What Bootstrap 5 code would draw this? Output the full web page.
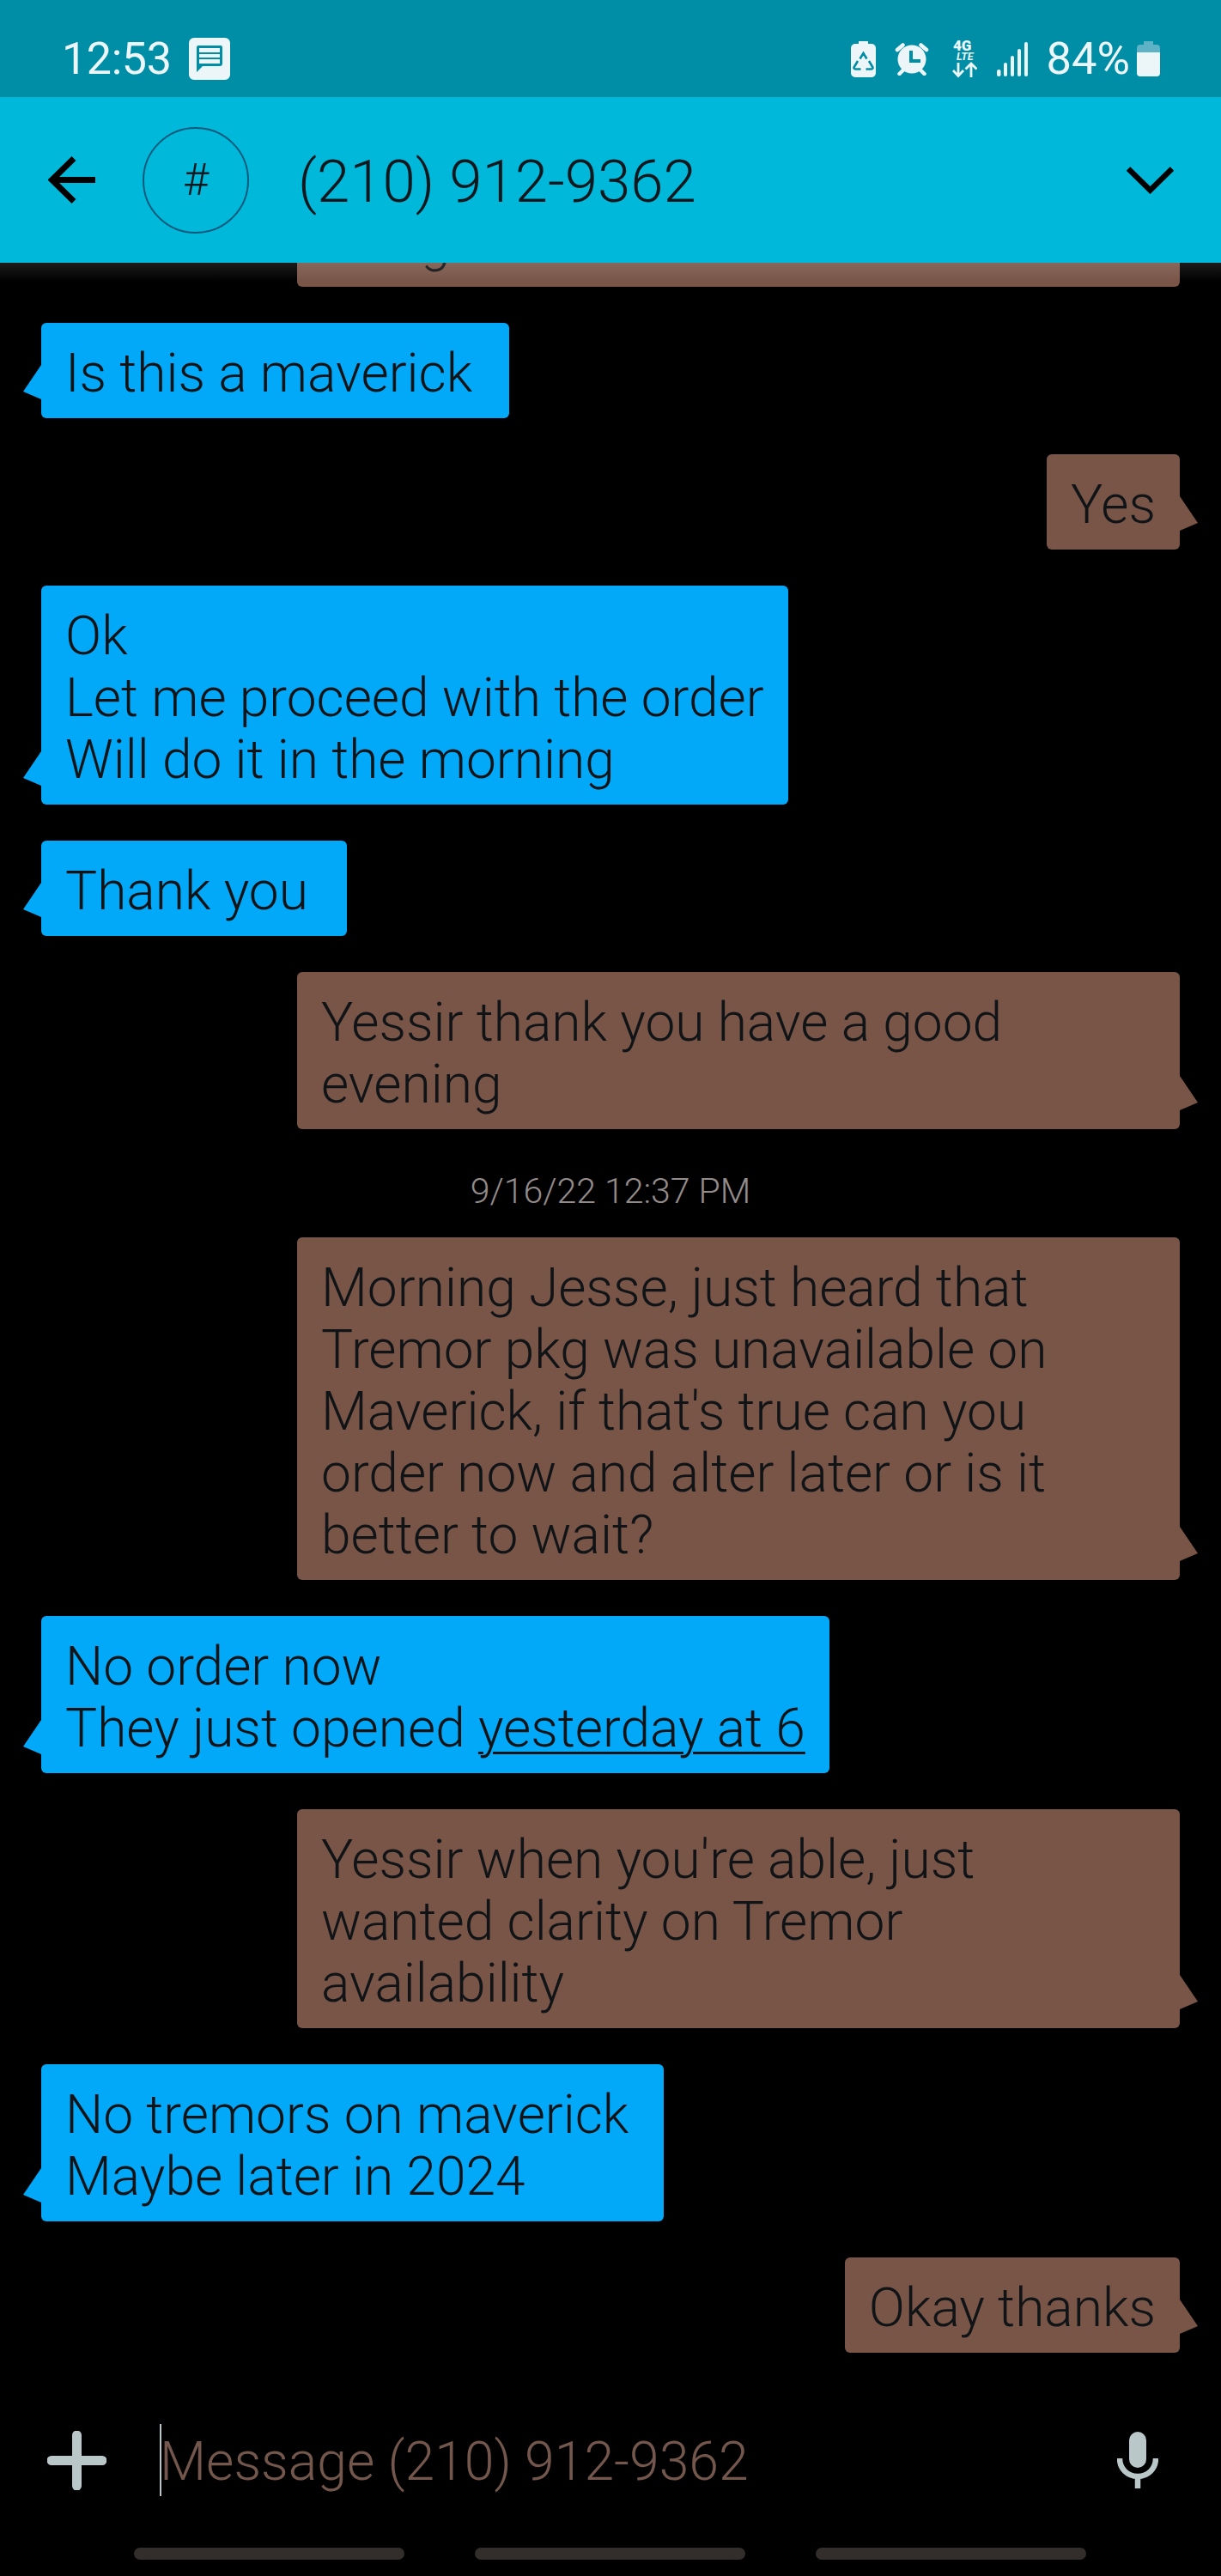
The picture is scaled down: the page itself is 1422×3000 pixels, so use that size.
<!DOCTYPE html>
<html lang="en">
<head>
<meta charset="utf-8">
<title>(210) 912-9362</title>
<link href="https://cdn.jsdelivr.net/npm/bootstrap@5.3.0/dist/css/bootstrap.min.css" rel="stylesheet">
<style>
html,body{background:#000;margin:0}
body{font-family:Roboto,"Liberation Sans",sans-serif;font-weight:300;width:1422px;height:3000px;overflow:hidden}
.sbar{height:113px;background:#008ea6;color:#ecf6f8;padding:24px 71px 0 72px;font-weight:400}
.sbar-time{font-size:52px;line-height:1;letter-spacing:-.4px;margin-right:20px}
.sbar-pct{font-size:52.5px;line-height:1;margin-left:22px;margin-right:8px}
.sbar svg{display:block;fill:#ecf6f8;flex:none}
.gap-22{margin-right:22px}
.gap-27{margin-right:27px}
.gap-23{margin-right:23px}
.apphead{height:193px;background:#00b8d9;padding:0 55px 0 56px;color:#10181e;position:relative;z-index:2}
.avatar{width:124px;height:124px;border:2px solid #085a7c;border-radius:50%;font-size:52px;margin-left:55px;margin-right:57px;flex:none}
.headname{font-size:69px;line-height:1;margin-top:3px}
.convo{height:2454px;overflow:hidden;padding:0 48px;position:relative}
.sheen{position:absolute;left:0;right:0;top:0;height:22px;background:linear-gradient(rgba(255,255,255,.11),rgba(255,255,255,0));pointer-events:none}
.bub{font-size:62.25px;line-height:72px;padding:23px 28px 16px 28px;border-radius:6px;color:#101417;position:relative;margin-bottom:42px;flex:none}
.bub-in{background:#03a9f9;align-self:flex-start}
.bub-out{background:#795548;align-self:flex-end}
.bub-wide{width:1028px}
.w-maverick{width:545px}
.w-thanks{width:356px}
.w-tremors{width:725px}
.tail{position:absolute;bottom:22px;width:21px;height:40px}
.bub-in .tail{left:-21px}
.bub-out .tail{right:-21px}
.tail-in{fill:#03a9f9}
.tail-out{fill:#795548}
.cliptop{margin-top:-155px}
.gword{padding-left:116px}
.stamp{font-size:41px;line-height:48px;color:#948c8a;text-align:center;margin:6px -48px 30px;flex:none}
.under{text-decoration:underline;text-underline-offset:6px;text-decoration-thickness:3px}
.composer{height:207px;padding:3px 73px 0 55px}
.caret{width:2px;height:84px;background:#b9c5c7;flex:none;margin-left:62px}
.ph{font-size:62.5px;color:#74574c;line-height:1;margin:5px 0 0 -2px}
.navline{gap:82px;padding-right:2px}
.navpill{width:315px;height:14px;background:#332e2c;border-radius:7px}
</style>
</head>
<body>
<div class="sbar d-flex align-items-center justify-content-between">
  <div class="d-flex align-items-center">
    <span class="sbar-time">12:53</span>
    <svg width="48" height="49" viewBox="0 0 48 49"><path fill-rule="evenodd" d="M6 0h36a6 6 0 0 1 6 6v37a6 6 0 0 1-6 6H6a6 6 0 0 1-6-6V6a6 6 0 0 1 6-6zM9 11v29l7-7h20a3 3 0 0 0 3-3V11a2 2 0 0 0-2-2H11a2 2 0 0 0-2 2zM12 12h24v5H12zM12 19h24v4H12zM12 25h24v5H12z"/></svg>
  </div>
  <div class="d-flex align-items-center">
    <svg class="gap-22" width="29" height="42" viewBox="0 0 29 42"><path d="M9 0h11v3h4a5 5 0 0 1 5 5v29a5 5 0 0 1-5 5H5a5 5 0 0 1-5-5V8a5 5 0 0 1 5-5h4z"/><path d="M10.500 20.500 14.500 14 18.500 20.500M8 23 3.800 30a1.600 1.600 0 0 0 1.400 2.500H11.500M21 23 25.200 30a1.600 1.600 0 0 1-1.400 2.500H17.500" fill="none" stroke="#008ea6" stroke-width="2.600"/></svg>
    <svg class="gap-27" width="40" height="39" viewBox="0 0 40 39"><circle cx="20" cy="20" r="16.500"/><path d="M3 9 9.500 3.500M37 9 30.500 3.500M5.500 37 9.500 33M34.500 37 30.500 33" stroke="#ecf6f8" stroke-width="4.500" stroke-linecap="round" fill="none"/><path d="M19 10V22H30" stroke="#008ea6" stroke-width="4" fill="none"/></svg>
    <svg class="gap-23" width="29" height="51" viewBox="0 -4 29 51"><text x="1" y="12" font-size="17" font-weight="900" font-family="Roboto" fill="#ecf6f8">4G</text><text x="5" y="22.500" font-size="12.500" font-style="italic" font-weight="700" font-family="Roboto" fill="#ecf6f8">LTE</text><path d="M7 26V41M1 35 7 41.500 13 35M22 43V27M15.500 33.500 22 27 28.500 33.500" stroke="#ecf6f8" stroke-width="2.800" fill="none"/></svg>
    <svg width="36" height="40" viewBox="0 0 36 40"><rect x="0" y="32" width="4.500" height="8" rx="2"/><rect x="8" y="24" width="4" height="16" rx="2"/><rect x="16" y="16" width="4" height="24" rx="2"/><rect x="24" y="8" width="4" height="32" rx="2"/><rect x="32" y="0" width="4" height="40" rx="2"/></svg>
    <span class="sbar-pct">84%</span>
    <svg width="27" height="41" viewBox="0 0 27 41"><path fill="#5db2c5" d="M8 0h11v4h4a4 4 0 0 1 4 4v5H0V8a4 4 0 0 1 4-4h4z"/><path d="M0 13h27v24a4 4 0 0 1-4 4H4a4 4 0 0 1-4-4z"/></svg>
  </div>
</div>
<div class="apphead d-flex align-items-center">
  <svg width="55" height="55" viewBox="0 0 55 55" fill="none" stroke="#000" stroke-width="7"><path d="M55 27.500H5M30 2.500 4.500 27.500 30 52.500"/></svg>
  <div class="avatar d-flex align-items-center justify-content-center">#</div>
  <div class="headname flex-grow-1">(210) 912-9362</div>
  <svg width="55" height="32" viewBox="0 0 55 32" fill="none" stroke="#000" stroke-width="6.500"><path d="M2 2.500 27.500 27.500 53 2.500"/></svg>
</div>
<div class="convo d-flex flex-column">
  <div class="bub bub-out bub-wide cliptop"><div>&nbsp;</div><div class="gword">g</div></div>
  <div class="bub bub-in w-maverick">Is this a maverick<svg class="tail tail-in" viewBox="0 0 21 40"><path d="M21 0 0 31l21 9z"/></svg></div>
  <div class="bub bub-out">Yes<svg class="tail tail-out" viewBox="0 0 21 40"><path d="M0 0l21 31-21 9z"/></svg></div>
  <div class="bub bub-in">Ok<br>Let me proceed with the order<br>Will do it in the morning<svg class="tail tail-in" viewBox="0 0 21 40"><path d="M21 0 0 31l21 9z"/></svg></div>
  <div class="bub bub-in w-thanks">Thank you<svg class="tail tail-in" viewBox="0 0 21 40"><path d="M21 0 0 31l21 9z"/></svg></div>
  <div class="bub bub-out bub-wide">Yessir thank you have a good<br>evening<svg class="tail tail-out" viewBox="0 0 21 40"><path d="M0 0l21 31-21 9z"/></svg></div>
  <div class="stamp">9/16/22 12:37 PM</div>
  <div class="bub bub-out bub-wide">Morning Jesse, just heard that<br>Tremor pkg was unavailable on<br>Maverick, if that's true can you<br>order now and alter later or is it<br>better to wait?<svg class="tail tail-out" viewBox="0 0 21 40"><path d="M0 0l21 31-21 9z"/></svg></div>
  <div class="bub bub-in">No order now<br>They just opened <span class="under">yesterday at 6</span><svg class="tail tail-in" viewBox="0 0 21 40"><path d="M21 0 0 31l21 9z"/></svg></div>
  <div class="bub bub-out bub-wide">Yessir when you're able, just<br>wanted clarity on Tremor<br>availability<svg class="tail tail-out" viewBox="0 0 21 40"><path d="M0 0l21 31-21 9z"/></svg></div>
  <div class="bub bub-in w-tremors">No tremors on maverick<br>Maybe later in 2024<svg class="tail tail-in" viewBox="0 0 21 40"><path d="M21 0 0 31l21 9z"/></svg></div>
  <div class="bub bub-out">Okay thanks<svg class="tail tail-out" viewBox="0 0 21 40"><path d="M0 0l21 31-21 9z"/></svg></div>
  <div class="sheen"></div>
</div>
<div class="composer d-flex align-items-center">
  <svg width="69" height="69" viewBox="0 0 69 69" class="flex-shrink-0"><path d="M29 5a5.500 5.500 0 0 1 11 0v24h24a5.500 5.500 0 0 1 0 11H40v24a5.500 5.500 0 0 1-11 0V40H5a5.500 5.500 0 0 1 0-11h24z" fill="#b9c7c9"/></svg>
  <div class="caret"></div>
  <div class="ph flex-grow-1">Message (210) 912-9362</div>
  <svg width="48" height="66" viewBox="0 0 48 66" class="flex-shrink-0"><rect x="14" y="0" width="20" height="42" rx="10" fill="#b9c7c9"/><path d="M3 31c0 12 9 21 21 21s21-9 21-21M24 52v14" fill="none" stroke="#b9c7c9" stroke-width="6.500"/></svg>
</div>
<div class="navline d-flex justify-content-center"><div class="navpill"></div><div class="navpill"></div><div class="navpill"></div></div>
</body>
</html>
